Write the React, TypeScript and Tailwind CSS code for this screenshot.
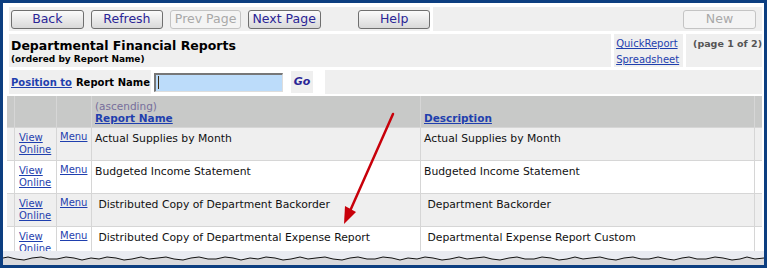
import React from 'react';

const rows = [
  { name: 'Actual Supplies by Month', desc: 'Actual Supplies by Month', shade: true },
  { name: 'Budgeted Income Statement', desc: 'Budgeted Income Statement', shade: false },
  { name: ' Distributed Copy of Department Backorder', desc: ' Department Backorder', shade: true },
  { name: ' Distributed Copy of Departmental Expense Report', desc: ' Departmental Expense Report Custom', shade: false },
];

const font = { fontFamily: '"DejaVu Sans", Verdana, sans-serif' };

const Btn = ({ label, disabled = false, w = 'w-[73px]' }: { label: string; disabled?: boolean; w?: string }) => (
  <button
    className={
      disabled
        ? `${w} h-[19px] rounded-[3px] border border-[#c4c4c4] bg-[#f4f4f4] text-[12.5px] leading-none text-[#a8a8a8]`
        : `${w} h-[19px] rounded-[3px] border border-[#6f6f6f] bg-gradient-to-b from-[#fbfbfb] to-[#d9d9d9] text-[12.5px] leading-none text-[#2a2596]`
    }
  >
    {label}
  </button>
);

const App = () => {
  return (
    <div className="relative w-[767px] h-[268px] bg-[#0c3e80] p-[3px] flex flex-col" style={font}>
      <div className="flex-1 bg-white flex flex-col overflow-hidden">
        <div className="h-[248px] shrink-0 overflow-hidden pl-[4px] pr-[2px] pt-[4px] flex flex-col">
          {/* button bar */}
          <div className="ml-[2px] flex shrink-0 gap-[3px] h-[24px]">
            <div className="w-[421px] bg-[#efefef] flex items-center pl-[2px] gap-[7px]">
              <Btn label="Back" />
              <Btn label="Refresh" />
              <Btn label="Prev Page" disabled w="w-[71px]" />
              <Btn label="Next Page" />
              <div className="w-[24px]" />
              <Btn label="Help" w="w-[72px]" />
            </div>
            <div className="flex-1 bg-[#efefef] flex items-center justify-end pr-[6px]">
              <Btn label="New" disabled />
            </div>
          </div>

          {/* title row */}
          <div className="ml-[2px] mt-[3px] flex shrink-0 gap-[3px] h-[33px]">
            <div className="w-[603px] bg-[#efefef] pl-[2px] pt-[4px] text-black font-bold">
              <div className="text-[12.5px] leading-[15px]">Departmental Financial Reports</div>
              <div className="text-[9px] leading-[12px]">(ordered by Report Name)</div>
            </div>
            <div className="w-[69px] bg-[#efefef] pl-[2px] pt-[2px] text-[10px] leading-[16px]">
              <div><a className="text-[#1f3fae] underline">QuickReport</a></div>
              <div><a className="text-[#1f3fae] underline">Spreadsheet</a></div>
            </div>
            <div className="flex-1 bg-[#efefef] pl-[7px] pt-[4px] text-[9.5px] leading-[12px] font-bold text-[#555] whitespace-nowrap">
              (page 1 of 2)
            </div>
          </div>

          {/* position row */}
          <div className="ml-[2px] mt-[3px] flex shrink-0 gap-[2px] h-[24px]">
            <div className="w-[142px] bg-[#efefef] flex items-center pl-[2px] text-[10px] font-bold whitespace-nowrap">
              <a className="text-[#1f3fae] underline">Position to</a>
              <span className="ml-[4px] text-black">Report Name</span>
            </div>
            <div className="w-[135px] bg-white flex items-center pl-[1px]">
              <div className="w-[129px] h-[19px] bg-[#bcdcfa] border-t-2 border-l-2 border-[#777] border-r border-b border-r-[#ddd] border-b-[#ddd] flex items-center pl-[2px]">
                <div className="w-px h-[13px] bg-[#3a2a10]" />
              </div>
            </div>
            <div className="w-[24px] bg-[#efefef] border border-white flex items-center justify-center text-[11px] font-bold italic text-[#2a2596]">
              Go
            </div>
            <div className="w-[7px] bg-white" />
            <div className="flex-1 bg-[#efefef]" />
          </div>

          {/* report table */}
          <div className="mt-[2px] shrink-0 grid grid-cols-[7px_41px_34px_328px_333px_7px] gap-px bg-[#d6d6d6] w-[755px] text-[10.8px]">
            <div className="h-[31px] bg-[#c8c9c8]" />
            <div className="bg-[#c8c9c8]" />
            <div className="bg-[#c8c9c8]" />
            <div className="bg-[#c8c9c8] flex flex-col justify-end pl-[3px] pb-[3px] text-[10.5px] leading-[12px]">
              <span className="text-[#776e9c]">(ascending)</span>
              <a className="text-[#1f3fae] underline font-bold">Report Name</a>
            </div>
            <div className="bg-[#c8c9c8] flex flex-col justify-end pl-[3px] pb-[3px] text-[10.5px] leading-[12px]">
              <a className="text-[#1f3fae] underline font-bold">Description</a>
            </div>
            <div className="bg-[#c8c9c8]" />

            {rows.map((r) => {
              const bg = r.shade ? 'bg-[#efefef]' : 'bg-white';
              return (
                <React.Fragment key={r.name}>
                  <div className={`${bg} h-[32px]`} />
                  <div className={`${bg} pl-[4px] pt-[4px] text-[10px] leading-[12px]`}>
                    <a className="text-[#1f3fae] underline">View</a>
                    <br />
                    <a className="text-[#1f3fae] underline">Online</a>
                  </div>
                  <div className={`${bg} pl-[3px] pt-[3px] text-[10px] leading-[12px]`}>
                    <a className="text-[#1f3fae] underline">Menu</a>
                  </div>
                  <div className={`${bg} pl-[3px] pt-[4px] leading-[14px] text-[#111] whitespace-pre`}>{r.name}</div>
                  <div className={`${bg} pl-[3px] pt-[4px] leading-[14px] text-[#111] whitespace-pre`}>{r.desc}</div>
                  <div className={bg} />
                </React.Fragment>
              );
            })}
          </div>
        </div>

        {/* torn paper edge */}
        <div className="flex-1 bg-[#d9d9dc] relative">
          <svg className="absolute inset-0" width="761" height="14" viewBox="0 0 761 14">
            <path
              d="M0 0 H761 V7 L752 8 L744 6 L737 8 L729 9 L720 7 L712 6 L703 8 L694 8 L686 6 L679 7 L671 9 L664 8 L655 6 L646 8 L638 8 L630 6 L621 7 L613 9 L605 8 L597 6 L588 7 L580 8 L572 6 L564 8 L556 9 L548 7 L539 6 L531 8 L522 8 L514 6 L506 7 L497 9 L489 8 L481 6 L472 7 L464 8 L456 6 L447 8 L439 9 L430 7 L422 6 L414 8 L405 7 L397 9 L389 7 L380 6 L372 8 L364 8 L355 6 L347 7 L339 9 L330 8 L322 6 L313 7 L305 8 L297 6 L288 8 L280 9 L272 7 L263 6 L255 8 L247 7 L238 9 L230 7 L222 6 L213 8 L205 8 L196 6 L188 7 L180 9 L171 8 L163 6 L155 7 L146 8 L138 6 L129 8 L121 9 L113 7 L104 6 L96 8 L88 7 L79 9 L71 7 L63 6 L54 8 L46 8 L38 6 L29 7 L21 9 L13 8 L5 6 L0 7 Z"
              fill="#e9ebf1"
              stroke="none"
            />
            <path
              d="M0 7 L5 6 L13 8 L21 9 L29 7 L38 6 L46 8 L54 8 L63 6 L71 7 L79 9 L88 7 L96 8 L104 6 L113 7 L121 9 L129 8 L138 6 L146 8 L155 7 L163 6 L171 8 L180 9 L188 7 L196 6 L205 8 L213 8 L222 6 L230 7 L238 9 L247 7 L255 8 L263 6 L272 7 L280 9 L288 8 L297 6 L305 8 L313 7 L322 6 L330 8 L339 9 L347 7 L355 6 L364 8 L372 8 L380 6 L389 7 L397 9 L405 7 L414 8 L422 6 L430 7 L439 9 L447 8 L456 6 L464 8 L472 7 L481 6 L489 8 L497 9 L506 7 L514 6 L522 8 L531 8 L539 6 L548 7 L556 9 L564 8 L572 6 L580 8 L588 7 L597 6 L605 8 L613 9 L621 7 L630 6 L638 8 L646 8 L655 6 L664 8 L671 9 L679 7 L686 6 L694 8 L703 8 L712 6 L720 7 L729 9 L737 8 L744 6 L752 8 L761 7"
              fill="none"
              stroke="#111"
              strokeWidth="1"
            />
          </svg>
        </div>
      </div>

      {/* red callout arrow */}
      <svg className="absolute left-0 top-0 pointer-events-none" width="767" height="268" viewBox="0 0 767 268">
        <line x1="393" y1="114" x2="350" y2="211" stroke="#c8000a" strokeWidth="2.5" strokeLinecap="round" />
        <polygon points="344,224 345,206 356,212" fill="#c8000a" />
      </svg>
    </div>
  );
};

export default App;
